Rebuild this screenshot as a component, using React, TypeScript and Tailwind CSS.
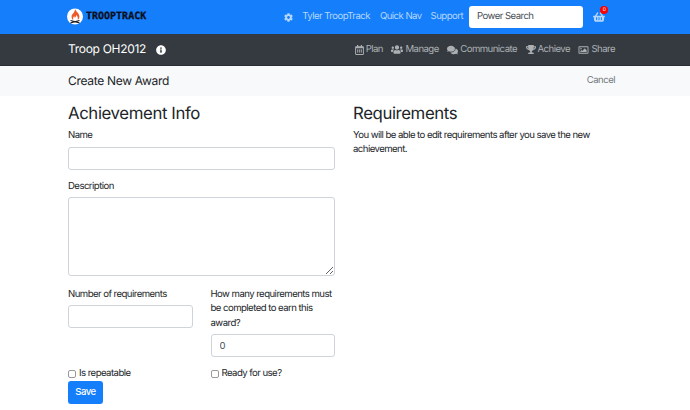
import { FaRegCalendarAlt, FaUsers, FaComments, FaTrophy, FaRegImage, FaCog, FaInfoCircle, FaShoppingBasket } from "react-icons/fa";

const font = { fontFamily: "Inter, 'Liberation Sans', sans-serif" };

function Logo() {
  return (
    <svg width="16" height="18" viewBox="0 0 16 18" className="shrink-0">
      <circle cx="8" cy="8.500" r="8" fill="#fff" />
      <path d="M8.500 1.500c.4 2 3.800 3.700 3.900 7 0 1.700-.7 2.700-1.500 3.500l-.2-2.800c-.3-1-.9-1.500-1.500-2.200.1 1.200-.6 2-1.300 2.700-.5-.4-.6-1-.6-1.700-1 .8-1.300 2-1.200 4-.9-.7-1.500-1.800-1.500-3.300 0-3.200 3.300-3.900 3.400-7.200z" fill="#ea5a2b" />
      <path d="M3.500 12.500l9 2.300M12.500 12.500l-9 2.300" stroke="#222" strokeWidth="1.200" />
    </svg>
  );
}

function NavItem({ icon, label }: { icon: React.ReactNode; label: string }) {
  return (
    <span className="flex items-center gap-[2px]">
      {icon}
      <span className="pt-[2px]">{label}</span>
    </span>
  );
}

const inputCls = "block w-full h-[23px] rounded-[3px] border border-[#ced4da] bg-white px-2 text-[#495057]";

function Check({ label }: { label: string }) {
  return (
    <label className="flex items-center gap-[3px]">
      <span className="w-[8px] h-[8px] mb-[2px] border border-[#9a9a9a] rounded-[2px] block" />
      {label}
    </label>
  );
}

export default function App() {
  return (
    <div style={font} className="w-[690px] h-[410px] overflow-hidden bg-white text-[9.600px] leading-[14.400px] tracking-[-0.55px] text-[#212529] [text-rendering:geometricPrecision]">
      <header className="h-[34px] bg-[#147efb] flex items-center pl-[67px] pr-[85px]">
        <Logo />
        <span className="ml-[3px] text-[10px] font-bold tracking-normal text-[#0b1020] [-webkit-text-stroke:0.3px_#0b1020]" style={{ fontFamily: "'DejaVu Sans Mono', monospace" }}>TROOPTRACK</span>
        <div className="ml-auto flex items-center text-[#b3d7ff]">
          <FaCog className="w-[9px] h-[9px] mr-[9px]" />
          <span className="mr-[10px]">Tyler TroopTrack</span>
          <span className="mr-[9px]">Quick Nav</span>
          <span className="mr-[6px]">Support</span>
          <div className="w-[114px] h-[22px] bg-white rounded-[3px] flex items-center pl-2 text-[#495057]">Power Search</div>
          <span className="relative ml-[10px] block">
            <FaShoppingBasket className="w-[12px] h-[12px] text-[#b3d7ff]" />
            <span className="absolute -top-[5px] left-[7px] w-[8px] h-[8px] rounded-full bg-[#f00] text-white text-[5px] leading-[8px] text-center">0</span>
          </span>
        </div>
      </header>
      <div className="h-[32px] bg-[#343a40] border-b border-[#2a2e33] flex items-center pl-[68px] pr-[75px]">
        <span className="text-white text-[12px] tracking-[-0.3px]">Troop OH2012</span>
        <FaInfoCircle className="ml-[10px] w-[10px] h-[10px] text-white" />
        <div className="ml-auto flex items-center gap-[8.500px] text-[#adb0b3]">
          <NavItem icon={<FaRegCalendarAlt className="w-[9px] h-[10px]" />} label="Plan" />
          <NavItem icon={<FaUsers className="w-[12px] h-[11px]" />} label="Manage" />
          <NavItem icon={<FaComments className="w-[11px] h-[10px]" />} label="Communicate" />
          <NavItem icon={<FaTrophy className="w-[10px] h-[9px]" />} label="Achieve" />
          <NavItem icon={<FaRegImage className="w-[11px] h-[10px]" />} label="Share" />
        </div>
      </div>
      <div className="h-[30px] bg-[#f8f9fa] flex items-center justify-between pl-[68px] pr-[75px]">
        <span className="text-[12px] tracking-[-0.3px]">Create New Award</span>
        <span className="text-[#777b80]">Cancel</span>
      </div>
      <main className="pl-[68px] pr-[75px] pt-[8px] flex gap-[18px]">
        <section className="w-[267px] shrink-0">
          <h2 className="text-[16.800px] leading-[20px] font-normal tracking-[-0.4px]">Achievement Info</h2>
          <label className="block mt-[5px] mb-[3.600px]">Name</label>
          <input className={inputCls} />
          <label className="block mt-[9.800px] mb-[2.800px]">Description</label>
          <textarea className="block w-full h-[79px] rounded-[3px] border border-[#ced4da] bg-white" />
          <div className="flex gap-[18px] mt-[11.800px]">
            <div className="w-[124.500px]">
              <div className="mb-[2.800px]">Number of requirements</div>
              <input className={inputCls} />
              <div className="mt-[39.300px]"><Check label="Is repeatable" /></div>
            </div>
            <div className="w-[124.500px]">
              <div className="mb-[3px]">How many requirements must be completed to earn this award?</div>
              <input className={inputCls} defaultValue="0" />
              <div className="mt-[10.300px]"><Check label="Ready for use?" /></div>
            </div>
          </div>
          <button className="block -mt-[1px] w-[35px] h-[23px] bg-[#147efb] text-white font-medium rounded-[3px]">Save</button>
        </section>
        <section className="flex-1">
          <h2 className="text-[16.800px] leading-[20px] font-normal tracking-[-0.4px]">Requirements</h2>
          <p className="mt-[5px]">You will be able to edit requirements after you save the new achievement.</p>
        </section>
      </main>
    </div>
  );
}
